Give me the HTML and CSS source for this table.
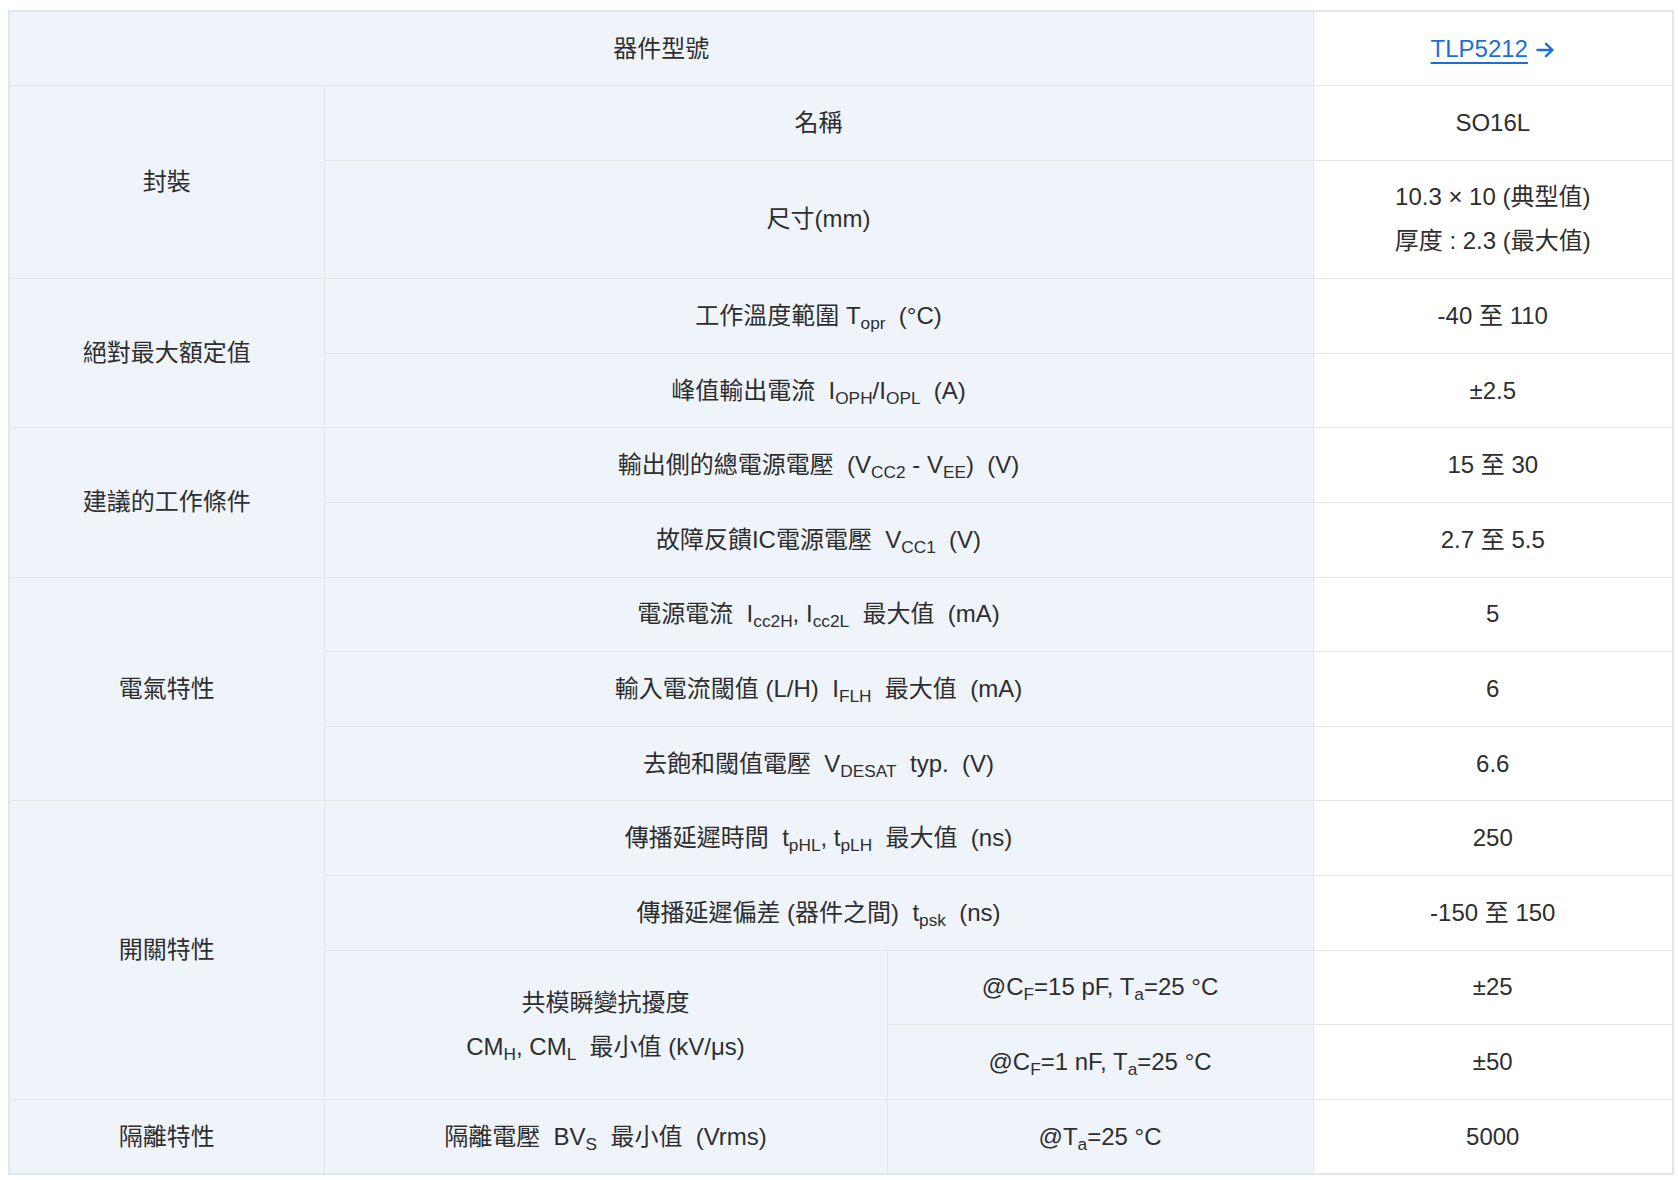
FILE: index.html
```html
<!DOCTYPE html>
<html lang="zh-Hant">
<head>
<meta charset="utf-8">
<title>TLP5212</title>
<link rel="stylesheet" href="styles.css">
</head>
<body>
<div class="wrap">
<table class="spec">
  <colgroup>
    <col class="c1"><col class="c2"><col class="c3"><col class="c4">
  </colgroup>
  <tr class="head">
    <th colspan="3" class="lbl">器件型號</th>
    <td class="val link-cell"><a class="part" href="#">TLP5212</a><svg class="arrow" width="19" height="16" viewBox="0 0 19 16"><path d="M1.5 8H16.5M10 1.8L16.5 8L10 14.2" fill="none" stroke="#1a6fd6" stroke-width="2.4" stroke-linecap="round" stroke-linejoin="round"/></svg></td>
  </tr>
  <tr>
    <th rowspan="2" class="lbl">封裝</th>
    <td colspan="2" class="lbl">名稱</td>
    <td class="val">SO16L</td>
  </tr>
  <tr>
    <td colspan="2" class="lbl">尺寸(mm)</td>
    <td class="val">10.3 × 10 (典型值)<br>厚度 : 2.3 (最大值)</td>
  </tr>
  <tr>
    <th rowspan="2" class="lbl">絕對最大額定值</th>
    <td colspan="2" class="lbl">工作溫度範圍 T<sub>opr</sub>&nbsp; (°C)</td>
    <td class="val">-40 至 110</td>
  </tr>
  <tr>
    <td colspan="2" class="lbl">峰值輸出電流&nbsp; I<sub>OPH</sub>/I<sub>OPL</sub>&nbsp; (A)</td>
    <td class="val">±2.5</td>
  </tr>
  <tr>
    <th rowspan="2" class="lbl">建議的工作條件</th>
    <td colspan="2" class="lbl">輸出側的總電源電壓&nbsp; (V<sub>CC2</sub> - V<sub>EE</sub>)&nbsp; (V)</td>
    <td class="val">15 至 30</td>
  </tr>
  <tr>
    <td colspan="2" class="lbl">故障反饋IC電源電壓&nbsp; V<sub>CC1</sub>&nbsp; (V)</td>
    <td class="val">2.7 至 5.5</td>
  </tr>
  <tr>
    <th rowspan="3" class="lbl">電氣特性</th>
    <td colspan="2" class="lbl">電源電流&nbsp; I<sub>cc2H</sub>, I<sub>cc2L</sub>&nbsp; 最大值&nbsp; (mA)</td>
    <td class="val">5</td>
  </tr>
  <tr>
    <td colspan="2" class="lbl">輸入電流閾值 (L/H)&nbsp; I<sub>FLH</sub>&nbsp; 最大值&nbsp; (mA)</td>
    <td class="val">6</td>
  </tr>
  <tr>
    <td colspan="2" class="lbl">去飽和閾值電壓&nbsp; V<sub>DESAT</sub>&nbsp; typ.&nbsp; (V)</td>
    <td class="val">6.6</td>
  </tr>
  <tr>
    <th rowspan="4" class="lbl">開關特性</th>
    <td colspan="2" class="lbl">傳播延遲時間&nbsp; t<sub>pHL</sub>, t<sub>pLH</sub>&nbsp; 最大值&nbsp; (ns)</td>
    <td class="val">250</td>
  </tr>
  <tr>
    <td colspan="2" class="lbl">傳播延遲偏差 (器件之間)&nbsp; t<sub>psk</sub>&nbsp; (ns)</td>
    <td class="val">-150 至 150</td>
  </tr>
  <tr>
    <td rowspan="2" class="lbl">共模瞬變抗擾度<br>CM<sub>H</sub>, CM<sub>L</sub>&nbsp; 最小值 (kV/μs)</td>
    <td class="lbl">@C<sub>F</sub>=15 pF, T<sub>a</sub>=25 °C</td>
    <td class="val">±25</td>
  </tr>
  <tr>
    <td class="lbl">@C<sub>F</sub>=1 nF, T<sub>a</sub>=25 °C</td>
    <td class="val">±50</td>
  </tr>
  <tr>
    <th class="lbl">隔離特性</th>
    <td class="lbl">隔離電壓&nbsp; BV<sub>S</sub>&nbsp; 最小值&nbsp; (Vrms)</td>
    <td class="lbl">@T<sub>a</sub>=25 °C</td>
    <td class="val">5000</td>
  </tr>
</table>
</div>
</body>
</html>
```

FILE: styles.css
```css
html, body {
  margin: 0;
  padding: 0;
  background: #ffffff;
}

.wrap {
  padding: 10px 6px 6px 8px;
}

.spec {
  width: 1664px;
  border-collapse: collapse;
  table-layout: fixed;
  border: 2px solid #e4e5e7;
  font-family: "Liberation Sans", Arial, "Noto Sans CJK TC", sans-serif;
  font-size: 24px;
  color: #2e2e2e;
}

.c1 { width: 315px; }
.c2 { width: 563px; }
.c3 { width: 426px; }
.c4 { width: 360px; }

.spec th,
.spec td {
  border: 1px solid #e4e5e7;
  padding: 14.8px 8px;
  line-height: 44px;
  text-align: center;
  vertical-align: middle;
  font-weight: normal;
}

.spec tr.head th,
.spec tr.head td {
  padding: 14.5px 8px;
}

.spec td.link-cell {
  padding-right: 17px;
}

.lbl {
  background: #eff4fb;
}

.val {
  background: #ffffff;
}

.spec sub {
  font-size: 0.72em;
  line-height: 0;
  vertical-align: -0.28em;
}

.part {
  color: #1a6fd6;
  text-decoration: underline;
  text-decoration-thickness: 2px;
  text-underline-offset: 5px;
}

.arrow {
  display: inline-block;
  margin-left: 8px;
  vertical-align: -1px;
}
```
